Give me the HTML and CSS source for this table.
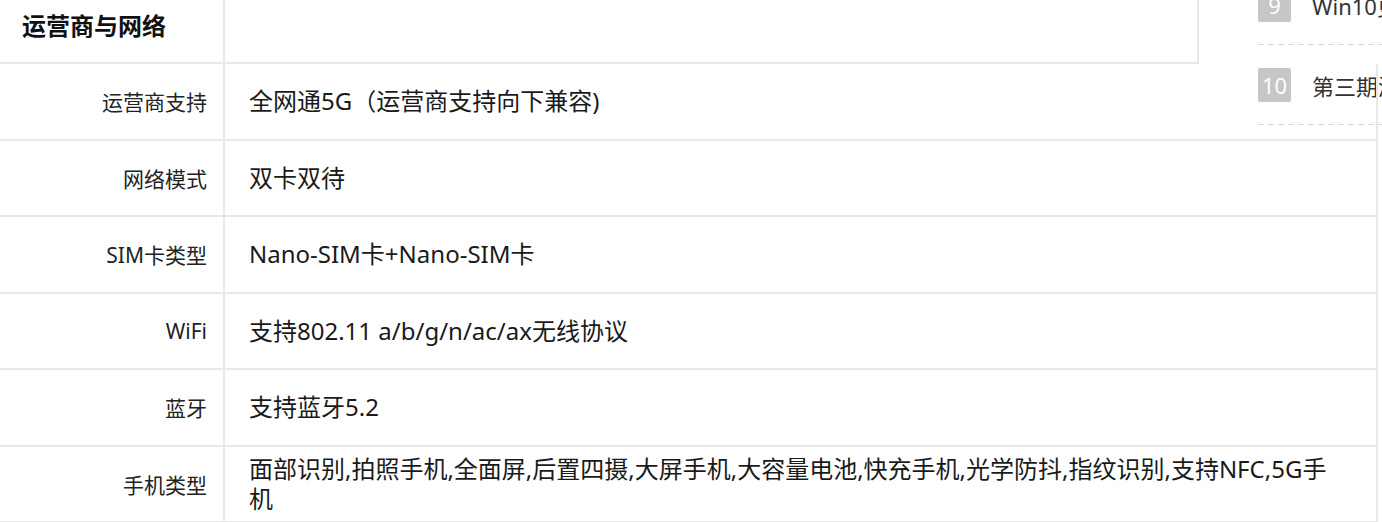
FILE: index.html
```html
<!DOCTYPE html>
<html lang="zh-CN">
<head>
<meta charset="utf-8">
<title>运营商与网络</title>
<link rel="stylesheet" href="styles.css">
</head>
<body>
<div class="page">
  <aside class="rank">
    <div class="rank-item"><span class="rank-num">9</span><span class="rank-title">Win10更新推送</span></div>
    <div class="rank-item"><span class="rank-num">10</span><span class="rank-title">第三期测评活动</span></div>
  </aside>
  <section class="spec">
    <div class="spec-head">
      <div class="head-label">运营商与网络</div>
      <div class="head-value"></div>
    </div>
    <div class="spec-body">
      <div class="row"><div class="label">运营商支持</div><div class="value">全网通5G（运营商支持向下兼容)</div></div>
      <div class="row"><div class="label">网络模式</div><div class="value">双卡双待</div></div>
      <div class="row"><div class="label">SIM卡类型</div><div class="value">Nano-SIM卡+Nano-SIM卡</div></div>
      <div class="row"><div class="label">WiFi</div><div class="value">支持802.11 a/b/g/n/ac/ax无线协议</div></div>
      <div class="row"><div class="label">蓝牙</div><div class="value">支持蓝牙5.2</div></div>
      <div class="row"><div class="label">手机类型</div><div class="value">面部识别,拍照手机,全面屏,后置四摄,大屏手机,大容量电池,快充手机,光学防抖,指纹识别,支持NFC,5G手机</div></div>
    </div>
  </section>
</div>
</body>
</html>
```

FILE: styles.css
```css
html, body {
  margin: 0;
  padding: 0;
  overflow: hidden;
  background: #fff;
}
body {
  font-family: "Noto Sans", "Noto Sans CJK SC", sans-serif;
  color: #222;
}
.page {
  position: relative;
  width: 1382px;
  height: 522px;
  overflow: hidden;
}
.rank {
  position: absolute;
  left: 1258px;
  top: -35px;
  width: 124px;
  overflow: hidden;
}
.rank-item {
  display: flex;
  align-items: center;
  padding: 23px 0 23px;
  background: repeating-linear-gradient(to right, #d9d9d9 0 6px, transparent 6px 10px) left bottom / 100% 1px no-repeat;
}
.rank-num {
  width: 33px;
  height: 34px;
  flex: none;
  display: flex;
  align-items: center;
  justify-content: center;
  background: #c6c6c6;
  color: #fff;
  font-size: 22px;
  border-radius: 2px;
}
.rank-title {
  margin-left: 21px;
  font-size: 22px;
  color: #333;
  white-space: nowrap;
}
.spec {
  position: relative;
  z-index: 1;
  width: 1378px;
}
.spec-head {
  display: flex;
  width: 1199px;
  height: 64px;
  box-sizing: border-box;
  border-bottom: 2px solid #e8e8e8;
  border-right: 2px solid #e8e8e8;
}
.head-label {
  width: 225px;
  box-sizing: border-box;
  border-right: 2px solid #e8e8e8;
  padding: 7px 0 0 22px;
  font-size: 24px;
  font-weight: 700;
  color: #111;
}
.head-value {
  flex: 1;
}
.spec-body {
  border-right: 2px solid #e8e8e8;
}
.row {
  display: grid;
  grid-template-columns: 225px 1fr;
  min-height: 74.5px;
  border-bottom: 2px solid #e8e8e8;
}
.label {
  box-sizing: border-box;
  border-right: 2px solid #e8e8e8;
  padding-right: 16px;
  display: flex;
  align-items: center;
  justify-content: flex-end;
  font-size: 21px;
  color: #222;
}
.value {
  display: flex;
  align-items: center;
  padding: 6px 26px 6px 24px;
  font-size: 24px;
  line-height: 30px;
  color: #1a1a1a;
}
```
